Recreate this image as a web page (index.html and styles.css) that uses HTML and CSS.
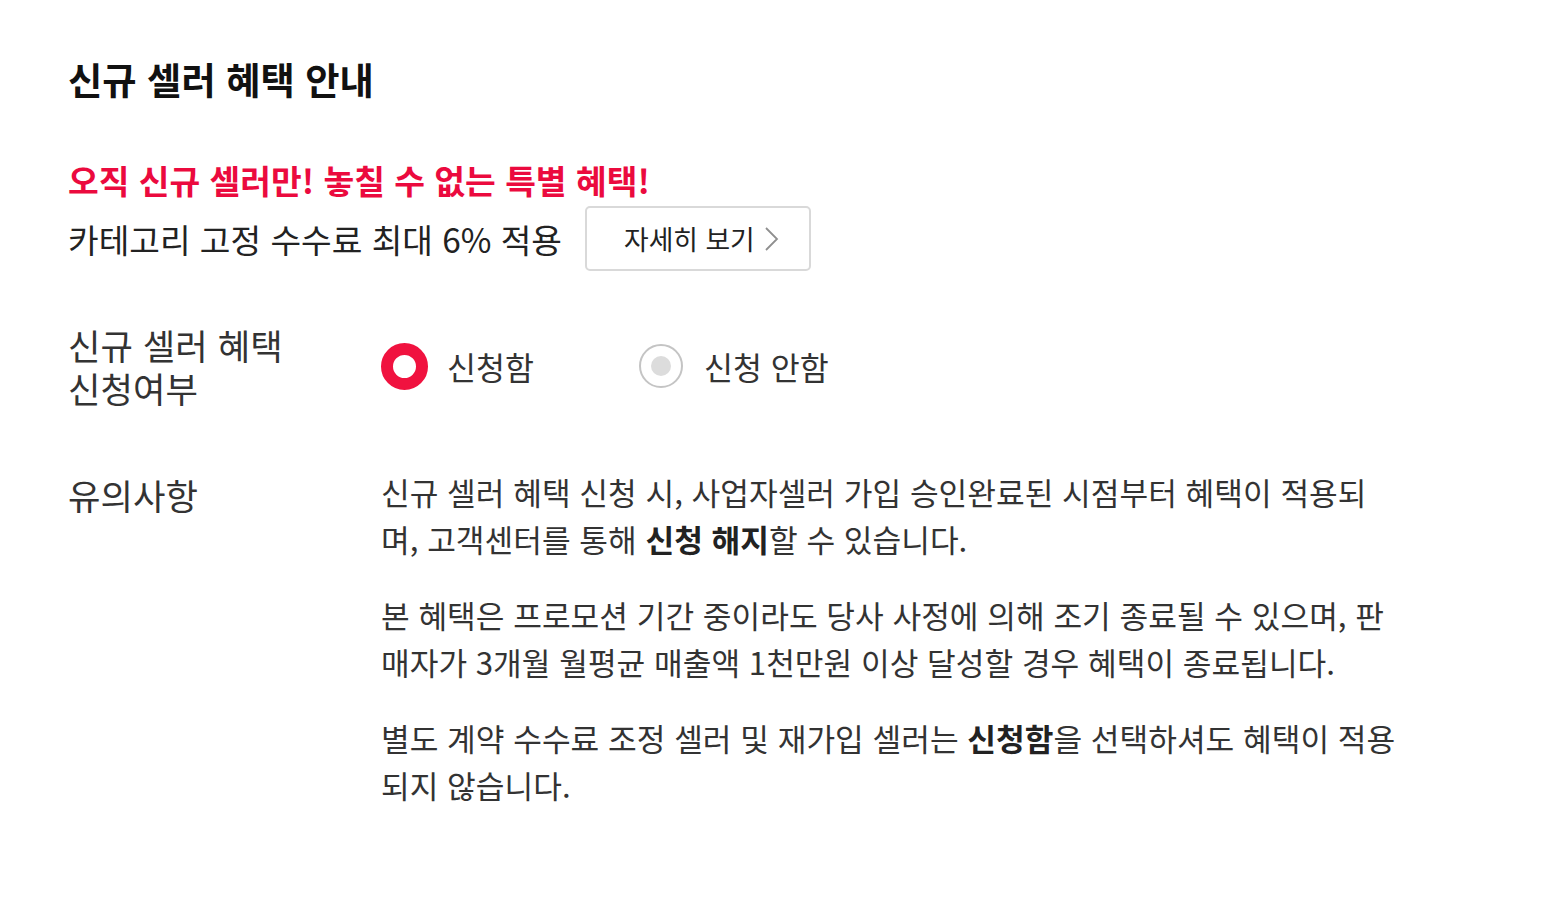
FILE: index.html
```html
<!DOCTYPE html>
<html lang="ko">
<head>
<meta charset="utf-8">
<title>신규 셀러 혜택 안내</title>
<link rel="stylesheet" href="styles.css">
</head>
<body>
<main class="page">
  <h1 class="title">신규 셀러 혜택 안내</h1>
  <section class="promo">
    <p class="promo-head">오직 신규 셀러만! 놓칠 수 없는 특별 혜택!</p>
    <div class="promo-row">
      <span class="promo-text">카테고리 고정 수수료 최대 6% 적용</span>
      <button class="detail-btn" type="button">자세히 보기<svg class="chev" width="16" height="26" viewBox="0 0 16 26"><polyline points="2,2 13,13 2,24" fill="none" stroke="#8f8f8f" stroke-width="1.8"/></svg></button>
    </div>
  </section>
  <div class="form">
    <div class="label label-radio">신규 셀러 혜택<br>신청여부</div>
    <div class="radios">
      <label class="opt"><span class="radio on"></span><span class="opt-text">신청함</span></label>
      <label class="opt opt-off"><span class="radio off"></span><span class="opt-text">신청 안함</span></label>
    </div>
    <div class="label label-notes">유의사항</div>
    <div class="notes">
      <p>신규 셀러 혜택 신청 시, 사업자셀러 가입 승인완료된 시점부터 혜택이 적용되며, 고객센터를 통해 <b>신청 해지</b>할 수 있습니다.</p>
      <p>본 혜택은 프로모션 기간 중이라도 당사 사정에 의해 조기 종료될 수 있으며, 판매자가 3개월 월평균 매출액 1천만원 이상 달성할 경우 혜택이 종료됩니다.</p>
      <p>별도 계약 수수료 조정 셀러 및 재가입 셀러는 <b>신청함</b>을 선택하셔도 혜택이 적용되지 않습니다.</p>
    </div>
  </div>
</main>
</body>
</html>
```
FILE: styles.css
```css
* { box-sizing: border-box; }
html, body { margin: 0; background: #fff; }
body {
  font-family: "Noto Sans CJK KR", "Noto Sans", sans-serif;
  color: #333;
}
.page { padding: 56px 68px 40px; }
.title {
  margin: 0;
  font-size: 37.3px;
  line-height: 46px;
  font-weight: 700;
  color: #111;
}
.promo { margin-top: 58px; }
.promo-head {
  margin: 0;
  font-size: 33.4px;
  line-height: 40px;
  font-weight: 700;
  color: #eb0a3e;
}
.promo-row {
  margin-top: 6px;
  display: flex;
  align-items: center;
  gap: 23px;
}
.promo-text { font-size: 33.3px; line-height: 40px; color: #222; }
.detail-btn {
  display: inline-flex;
  align-items: center;
  gap: 9px;
  width: 226px;
  height: 65px;
  padding: 0 0 0 37px;
  border: 2px solid #d9d9d9;
  border-radius: 5px;
  background: #fff;
  font-family: inherit;
  font-size: 26.8px;
  color: #222;
}
.chev { display: block; }
.form {
  margin-top: 52px;
  display: grid;
  grid-template-columns: 313px 1015px;
  row-gap: 60px;
}
.label { font-size: 35.3px; line-height: 43px; color: #333; }
.label-notes { padding-top: 4px; }
.radios { display: flex; align-items: center; gap: 105px; }
.opt { display: flex; align-items: center; gap: 19px; }
.opt-off { gap: 21px; }
.radio {
  display: block;
  border-radius: 50%;
  position: relative;
}
.radio.on { width: 47px; height: 47px; border: 12px solid #f0123f; background: #fff; }
.radio.off { width: 44px; height: 44px; border: 2px solid #c4c4c4; background: #fff; }
.radio.off::after {
  content: "";
  position: absolute;
  left: 50%; top: 50%;
  width: 20px; height: 20px;
  margin: -10px 0 0 -10px;
  border-radius: 50%;
  background: #dcdcdc;
}
.opt-text { font-size: 31.5px; line-height: 40px; color: #333; }
.notes p {
  margin: 0 0 30px;
  font-size: 31.2px;
  line-height: 46.5px;
  color: #333;
}
.notes p:last-child { margin-bottom: 0; }
.notes b { font-weight: 700; color: #222; }
```
